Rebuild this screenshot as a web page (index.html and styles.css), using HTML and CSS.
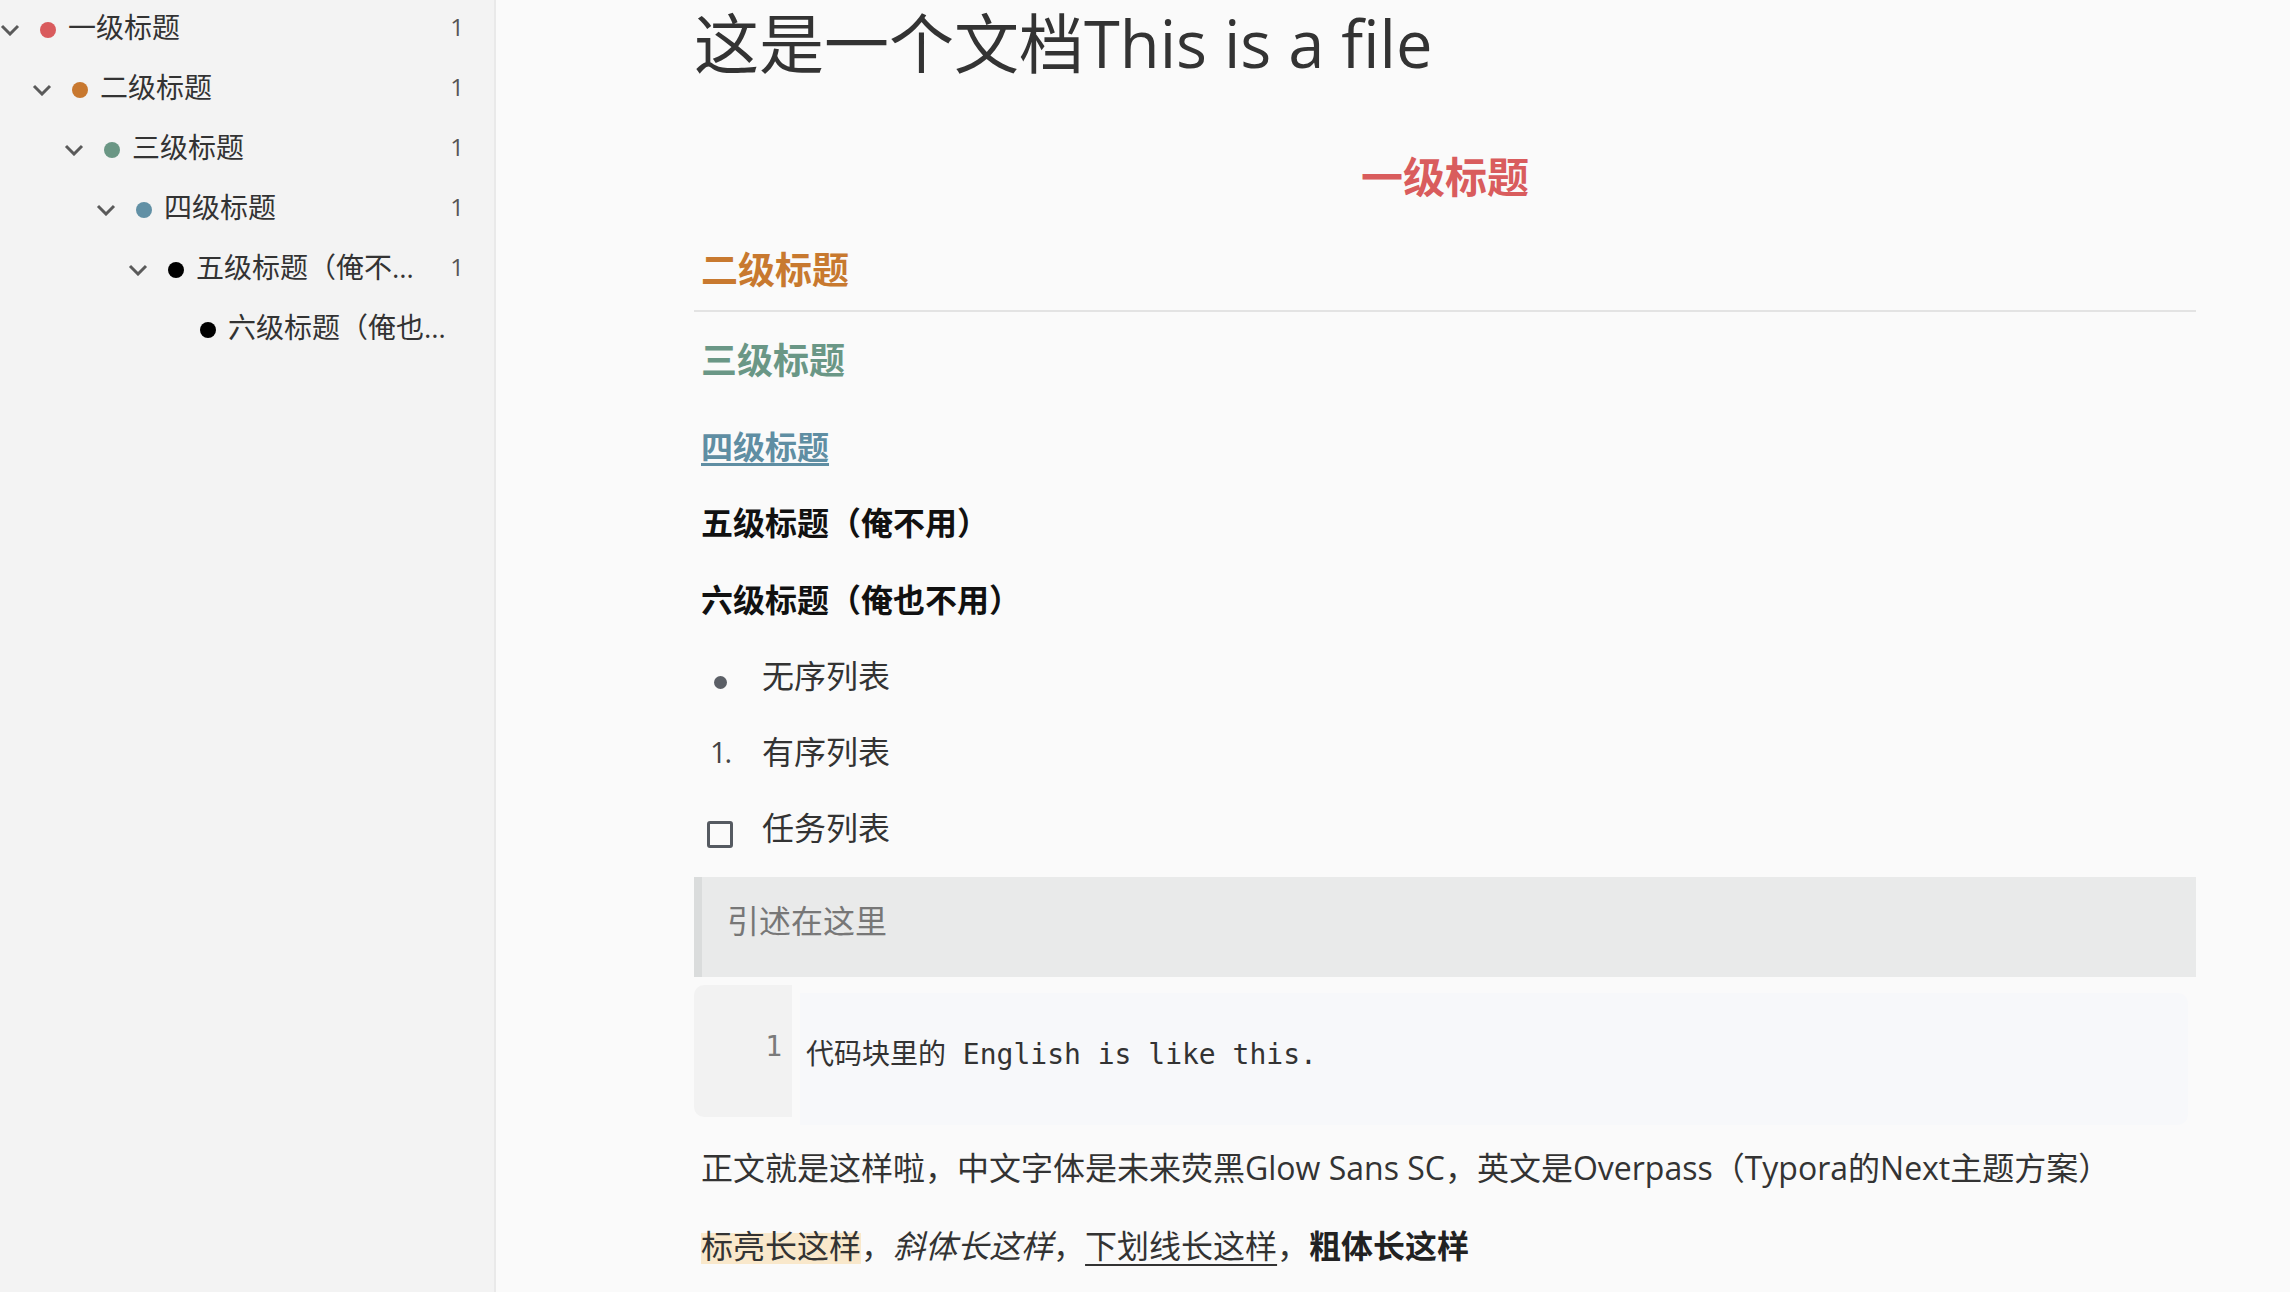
FILE: index.html
```html
<!DOCTYPE html>
<html lang="zh-CN">
<head>
<meta charset="utf-8">
<title>这是一个文档</title>
<link rel="stylesheet" href="styles.css">
</head>
<body>
<div class="app">
  <aside class="outline">
    <div class="row lv1"><svg class="chev" viewBox="0 0 20 12"><polyline points="2,2 10,10 18,2"/></svg><span class="dot red"></span><span class="label">一级标题</span><span class="count">1</span></div>
    <div class="row lv2"><svg class="chev" viewBox="0 0 20 12"><polyline points="2,2 10,10 18,2"/></svg><span class="dot orange"></span><span class="label">二级标题</span><span class="count">1</span></div>
    <div class="row lv3"><svg class="chev" viewBox="0 0 20 12"><polyline points="2,2 10,10 18,2"/></svg><span class="dot green"></span><span class="label">三级标题</span><span class="count">1</span></div>
    <div class="row lv4"><svg class="chev" viewBox="0 0 20 12"><polyline points="2,2 10,10 18,2"/></svg><span class="dot blue"></span><span class="label">四级标题</span><span class="count">1</span></div>
    <div class="row lv5"><svg class="chev" viewBox="0 0 20 12"><polyline points="2,2 10,10 18,2"/></svg><span class="dot black"></span><span class="label">五级标题（俺不用）</span><span class="count">1</span></div>
    <div class="row lv6"><span class="chev-space"></span><span class="dot black"></span><span class="label">六级标题（俺也不用）</span></div>
  </aside>
  <main class="doc">
    <div class="write">
      <div class="title">这是一个文档This is a file</div>
      <h1 class="h1">一级标题</h1>
      <h2 class="h2">二级标题</h2>
      <h3 class="h3">三级标题</h3>
      <h4 class="h4"><span class="h4-text">四级标题</span></h4>
      <h5 class="h5">五级标题（俺不用）</h5>
      <h6 class="h6">六级标题（俺也不用）</h6>
      <ul class="list">
        <li class="item"><span class="marker"><span class="bullet"></span></span><span>无序列表</span></li>
      </ul>
      <ol class="list">
        <li class="item"><span class="marker"><span class="num">1.</span></span><span>有序列表</span></li>
      </ol>
      <ul class="list">
        <li class="item"><span class="marker"><span class="checkbox"></span></span><span>任务列表</span></li>
      </ul>
      <blockquote class="quote">引述在这里</blockquote>
      <div class="code">
        <div class="gutter">1</div>
        <div class="code-lines">代码块里的 English is like this.</div>
      </div>
      <p class="para">正文就是这样啦，中文字体是未来荧黑Glow Sans SC，英文是Overpass（Typora的Next主题方案）</p>
      <p class="para para2"><mark class="hl">标亮长这样</mark>，<em class="it">斜体长这样</em>，<u class="ul">下划线长这样</u>，<strong class="bd">粗体长这样</strong></p>
    </div>
  </main>
</div>
</body>
</html>
```

FILE: styles.css
```css
* { box-sizing: border-box; }

html, body {
  margin: 0;
  padding: 0;
}

body {
  background: #fafafa;
  font-family: "Open Sans", "Noto Sans CJK SC", sans-serif;
  color: #333;
  overflow: hidden;
}

.app {
  display: flex;
  height: 1292px;
}

/* ---------- outline sidebar ---------- */
.outline {
  width: 496px;
  flex: none;
  background: #f3f3f3;
  border-right: 2px solid #e9e9e9;
  padding: 0 30px 0 0;
}

.row {
  display: flex;
  align-items: center;
  height: 60px;
  font-size: 28px;
  line-height: 60px;
  color: #333;
}

.lv1 { padding-left: 0; }
.lv2 { padding-left: 32px; }
.lv3 { padding-left: 64px; }
.lv4 { padding-left: 96px; }
.lv5 { padding-left: 128px; }
.lv6 { padding-left: 160px; }

.chev {
  width: 20px;
  height: 12px;
  flex: none;
}

.chev polyline {
  fill: none;
  stroke: #5a5a5a;
  stroke-width: 3;
}

.chev-space {
  width: 20px;
  flex: none;
}

.dot {
  width: 16px;
  height: 16px;
  border-radius: 50%;
  margin-left: 20px;
  flex: none;
}

.red { background: #d95b5d; }
.orange { background: #c8782f; }
.green { background: #6a9684; }
.blue { background: #6190a5; }
.black { background: #000; }

.label {
  flex: 1;
  min-width: 0;
  margin-left: 12px;
  padding-bottom: 6px;
  white-space: nowrap;
  overflow: hidden;
  text-overflow: ellipsis;
}

.count {
  width: 36px;
  flex: none;
  text-align: right;
  font-size: 24px;
  padding-bottom: 6px;
  color: #555;
}

/* ---------- document ---------- */
.doc {
  flex: 1;
  padding-left: 198px;
}

.write {
  width: 1502px;
}

.title {
  font-size: 65px;
  line-height: 86px;
  font-weight: 400;
  color: #333;
}

.h1, .h2, .h3, .h4, .h5, .h6 {
  margin: 0;
  padding: 0 7px;
  font-weight: 700;
}

.h1 {
  margin-top: 61px;
  font-size: 42px;
  line-height: 60px;
  text-align: center;
  color: #d95c5d;
}

.h2 {
  margin-top: 35px;
  font-size: 37px;
  line-height: 56px;
  padding-bottom: 12px;
  border-bottom: 2px solid #e3e3e3;
  color: #c8792f;
}

.h3 {
  margin-top: 21px;
  font-size: 36px;
  line-height: 56px;
  color: #6a9786;
}

.h4 {
  margin-top: 34px;
  font-size: 32px;
  line-height: 48px;
  color: #5f8ea3;
}

.h4-text {
  text-decoration: underline;
  text-decoration-thickness: 3px;
  text-underline-offset: 4px;
  text-decoration-color: #5f8ea3;
}

.h5 {
  margin-top: 28px;
  font-size: 32px;
  line-height: 48px;
  color: #111;
}

.h6 {
  margin-top: 29px;
  font-size: 32px;
  line-height: 48px;
  color: #111;
}

.list {
  list-style: none;
  margin: 28px 0 0;
  padding: 0;
}

.item {
  display: flex;
  align-items: center;
  font-size: 32px;
  line-height: 48px;
  color: #333;
}

.marker {
  width: 68px;
  flex: none;
  display: flex;
  align-items: center;
}

.bullet {
  width: 13px;
  height: 13px;
  border-radius: 50%;
  background: #5b5f66;
  margin-left: 20px;
  margin-top: 12px;
}

.num {
  margin-left: 16px;
  font-size: 29px;
  color: #444;
  letter-spacing: -2px;
}

.checkbox {
  width: 26px;
  height: 27px;
  margin-left: 13px;
  margin-top: 13px;
  border: 3px solid #555a61;
  border-radius: 3px;
}

.quote {
  margin: 25px 0 0;
  padding: 20px 0 32px 25px;
  border-left: 8px solid #dadcdc;
  background: #e9eaea;
  color: #777;
  font-size: 32px;
  line-height: 48px;
}

.code {
  display: flex;
  align-items: flex-start;
  margin-top: 8px;
  font-family: "DejaVu Sans Mono", "Noto Sans CJK SC", monospace;
  font-size: 28px;
  line-height: 52px;
}

.gutter {
  width: 98px;
  height: 132px;
  flex: none;
  background: #f2f2f2;
  border-radius: 10px 0 0 10px;
  padding: 36px 10px 0 0;
  text-align: right;
  color: #7b7b7b;
}

.code-lines {
  flex: 1;
  height: 132px;
  margin: 8px 8px 0 8px;
  background: #f7f8fa;
  border-radius: 0 10px 10px 0;
  padding: 36px 0 0 6px;
  color: #333;
  white-space: pre;
}

.para {
  margin: 19px 0 0;
  padding: 0 7px;
  font-size: 32px;
  line-height: 48px;
  color: #333;
}

.para2 {
  margin-top: 30px;
}

.hl {
  color: #333;
  background: linear-gradient(to bottom, transparent 20%, #f9e8cb 20%, #f9e8cb 94%, transparent 94%);
}

.it {
  font-style: italic;
}

.ul {
  text-decoration: underline;
  text-decoration-thickness: 2px;
  text-underline-offset: 6px;
  text-decoration-color: #333;
}

.bd {
  font-weight: 700;
  color: #222;
}
```
